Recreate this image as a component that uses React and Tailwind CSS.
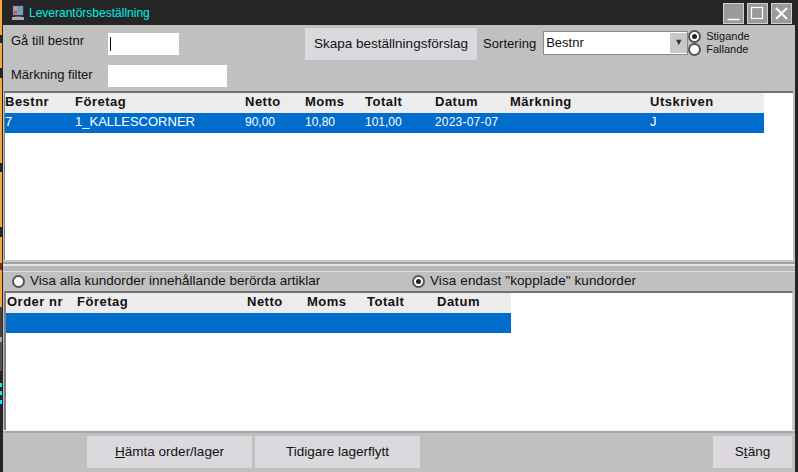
const font = "font-['Liberation_Sans',Arial,sans-serif]"

// widths taken from the column starts in the grid headers
const topCols = [
    { label: "Bestnr", value: "7", w: "w-[70px]", cell: "text-[13px]" },
    { label: "Företag", value: "1_KALLESCORNER", w: "w-[170px]", cell: "text-[13px]" },
    { label: "Netto", value: "90,00", w: "w-[60px]", cell: "text-[12px]" },
    { label: "Moms", value: "10,80", w: "w-[60px]", cell: "text-[12px]" },
    { label: "Totalt", value: "101,00", w: "w-[70px]", cell: "text-[12px]" },
    { label: "Datum", value: "2023-07-07", w: "w-[75px]", cell: "text-[12px] tracking-[0.2px]" },
    { label: "Märkning", value: "", w: "w-[140px]", cell: "text-[12px]" },
    { label: "Utskriven", value: "J", w: "w-[114px]", cell: "text-[13px]" },
]

const bottomCols = [
    { label: "Order nr", w: "w-[70px]" },
    { label: "Företag", w: "w-[170px]" },
    { label: "Netto", w: "w-[60px]" },
    { label: "Moms", w: "w-[60px]" },
    { label: "Totalt", w: "w-[70px]" },
    { label: "Datum", w: "w-[75px]" },
]

// what shows of the desktop behind the left window edge
const desktopStrip = [
    "h-[35px] bg-[#f5a93c]",
    "h-[8px]",
    "h-[25px] bg-[#f5a93c]",
    "h-[10px]",
    "h-[85px] bg-[#f5a93c]",
    "h-[9px]",
    "h-[55px] bg-[#f5a93c]",
    "h-[10px]",
    "h-[26px] bg-[#f5a93c]",
    "h-[7px] bg-[#8a2a1a]",
    "h-[37px] bg-[#f5a93c]",
    "h-[30px] bg-[#444]",
    "h-[5px] bg-[#aaa]",
    "h-[29px] bg-[#555]",
    "h-[12px]",
    "h-[4px] bg-[#00f0ff]",
    "h-[4px]",
    "h-[4px] bg-[#00f0ff]",
    "h-[5px]",
    "h-[4px] bg-[#00f0ff]",
]

function Radio({ checked }) {
    return (
        <span className="w-[13px] h-[13px] shrink-0 rounded-full bg-white border-2 border-[#555] flex items-center justify-center">
            {checked && <span className="w-[5px] h-[5px] rounded-full bg-[#222]"></span>}
        </span>
    )
}

function WinButton({ children }) {
    return (
        <div className="w-[21px] h-[21px] bg-[#9a9a9a] border border-[#d0d0d0]">
            <svg width="19" height="19" viewBox="0 0 19 19" fill="none" stroke="#fff">
                {children}
            </svg>
        </div>
    )
}

function FlatButton({ className, children }) {
    return (
        <button className={`h-8 bg-[#dbd9de] text-[13.5px] text-[#111] flex items-center justify-center ${className}`}>
            {children}
        </button>
    )
}

export default function App() {
    return (
        <div className={`w-[798px] h-[472px] overflow-hidden flex bg-[#252525] ${font}`}>
            <div className="w-[3px] h-full shrink-0">
                <div className="w-[2px] h-full flex flex-col">
                    {desktopStrip.map((c, i) => (
                        <div key={i} className={`shrink-0 ${c}`}></div>
                    ))}
                </div>
            </div>

            <div className="flex-1 flex flex-col min-w-0">
                {/* Title bar */}
                <div className="h-[25px] flex items-center shrink-0">
                    <svg width="16" height="16" viewBox="0 0 16 16" className="ml-[7px]">
                        <rect x="2" y="0" width="12" height="11" fill="#2f3048" />
                        <rect x="3" y="1" width="10" height="9" fill="#8890d8" />
                        <rect x="4" y="2" width="3" height="3" fill="#d8a060" />
                        <rect x="4" y="6" width="3" height="3" fill="#d05060" />
                        <rect x="8" y="3" width="4" height="5" fill="#60b080" />
                        <rect x="5" y="11" width="6" height="1" fill="#606070" />
                        <rect x="2" y="12" width="12" height="3" fill="#a8a8b8" />
                    </svg>
                    <span className="ml-[3px] mt-px text-[12px] text-[#00f0e8]">Leverantörsbeställning</span>
                    <div className="ml-auto flex gap-[3px] mr-[3px] mt-[2px]">
                        <WinButton><path d="M3.5 15.5H15.5" strokeWidth="1.5" /></WinButton>
                        <WinButton><rect x="3.5" y="3.5" width="11" height="11" strokeWidth="1.2" /></WinButton>
                        <WinButton><path d="M4 4L15 15M15 4L4 15" strokeWidth="2" /></WinButton>
                    </div>
                </div>

                {/* Form + grids */}
                <div className="flex-1 bg-[#c0c0c0] flex flex-col min-h-0 text-[#111] text-[13px]">
                    <div className="h-[66px] shrink-0 flex">
                        <div className="w-[105px] pl-[8px] pt-[8px] flex flex-col gap-[19px]">
                            <span className="leading-[15px]">Gå till bestnr</span>
                            <span className="leading-[15px]">Märkning filter</span>
                        </div>
                        <div className="flex flex-col pt-[8px] gap-[10px]">
                            <div className="w-[71px] h-[22px] bg-white flex items-center pl-[2px]">
                                <span className="w-px h-[14px] bg-black"></span>
                            </div>
                            <div className="w-[119px] h-[22px] bg-white"></div>
                        </div>
                        <FlatButton className="w-[172px] ml-[78px] mt-[3px]">Skapa beställningsförslag</FlatButton>
                        <span className="ml-[6px] mt-[9px] tracking-[0.05px]">Sortering</span>
                        <div className="ml-[7px] mt-[6px] w-[145px] h-[24px] bg-white border border-[#8a8a8a] flex items-center justify-between pl-[2px]">
                            <span>Bestnr</span>
                            <span className="w-[17px] h-[20px] bg-[#c8c8c8] flex items-center justify-center text-[9px] text-[#333]">▼</span>
                        </div>
                        <div className="flex flex-col pt-[5px] text-[11px] leading-[13px]">
                            <div className="flex items-center gap-[5px]"><Radio checked /><span className="-mt-px">Stigande</span></div>
                            <div className="flex items-center gap-[5px]"><Radio /><span>Fallande</span></div>
                        </div>
                    </div>

                    {/* Orders grid */}
                    <div className="h-[169px] shrink-0 ml-px mr-[2px] bg-white border-t-2 border-t-[#707070] border-l border-l-[#808080]">
                        <div className="w-[759px] h-[20px] pb-[2px] bg-[#ececec] flex items-center font-bold tracking-[0.5px]">
                            {topCols.map((c) => (
                                <span key={c.label} className={`${c.w} shrink-0`}>{c.label}</span>
                            ))}
                        </div>
                        <div className="w-[759px] h-[20px] pb-[2px] bg-[#006dcc] flex items-center text-white">
                            {topCols.map((c) => (
                                <span key={c.label} className={`${c.w} ${c.cell} shrink-0`}>{c.value}</span>
                            ))}
                        </div>
                    </div>

                    {/* Splitter */}
                    <div className="h-[12px] shrink-0 flex flex-col">
                        <div className="h-[2px] bg-[#c8c8c8]"></div>
                        <div className="h-[2px] bg-[#a0a0a0]"></div>
                        <div className="h-[2px] bg-[#e4e4e4]"></div>
                        <div className="h-[5px] bg-[#b8b8b8]"></div>
                        <div className="h-px bg-[#e0e0e0]"></div>
                    </div>

                    {/* Customer order filter */}
                    <div className="h-[19px] shrink-0 flex items-center pl-[9px] text-[13.5px]">
                        <Radio />
                        <span className="ml-[5px] w-[382px]">Visa alla kundorder innehållande berörda artiklar</span>
                        <Radio checked />
                        <span className="ml-[5px] tracking-[0.1px]">Visa endast "kopplade" kundorder</span>
                    </div>

                    {/* Customer orders grid */}
                    <div className="h-[139px] shrink-0 ml-px mr-[2px] bg-white border-t-2 border-t-[#707070] border-l-2 border-l-[#808080] border-r border-r-[#d0d0d0]">
                        <div className="w-[505px] h-[20px] pb-[2px] pl-px bg-[#ececec] flex items-center font-bold tracking-[0.5px]">
                            {bottomCols.map((c) => (
                                <span key={c.label} className={`${c.w} shrink-0`}>{c.label}</span>
                            ))}
                        </div>
                        <div className="w-[505px] h-[20px] bg-[#006dcc]"></div>
                    </div>

                    <div className="h-[3px] shrink-0 bg-[#f0f0f0] border-b-2 border-b-[#a8a8a8]"></div>

                    {/* Footer */}
                    <div className="flex-1 flex items-start pt-[3px]">
                        <FlatButton className="w-[165px] ml-[84px]"><span><span className="underline">H</span>ämta order/lager</span></FlatButton>
                        <FlatButton className="w-[165px] ml-[3px]">Tidigare lagerflytt</FlatButton>
                        <FlatButton className="w-[79px] ml-auto mr-[3px]"><span>S<span className="underline">t</span>äng</span></FlatButton>
                    </div>
                </div>
            </div>

            <div className="w-[3px] h-full shrink-0"></div>
        </div>
    )
}
